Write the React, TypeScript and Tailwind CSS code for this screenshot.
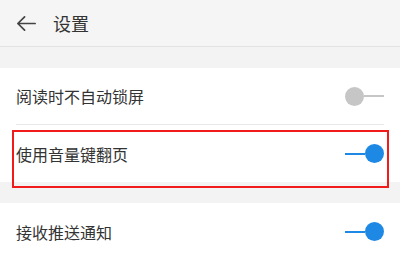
const font = { fontFamily: '"Noto Sans CJK SC", "Noto Sans", sans-serif' };

function Toggle({ on }: { on: boolean }) {
  const color = on ? 'bg-[#1e88e5]' : 'bg-[#c6c6c6]';
  return (
    <div className={`flex items-center w-[39px] shrink-0 ${on ? 'flex-row' : 'flex-row-reverse'}`}>
      <div className={`h-[2px] flex-1 ${color}`} />
      <div className={`w-[19px] h-[19px] rounded-full shrink-0 ${color}`} />
    </div>
  );
}

function Row({ label, on, divider }: { label: string; on: boolean; divider?: boolean }) {
  return (
    <div className="pl-4 pr-[16px]">
      <div className={`flex items-center justify-between h-[57px] ${divider ? 'border-b border-[#e8e8e8]' : ''}`}>
        <span className="text-[16px] text-[#333333] leading-none">{label}</span>
        <Toggle on={on} />
      </div>
    </div>
  );
}

export default function App() {
  return (
    <div className="w-[400px] h-[258px] bg-[#f3f3f3] overflow-hidden relative flex flex-col gap-[21px]" style={font}>
      {/* Header */}
      <div className="h-[47px] shrink-0 flex items-center gap-[15px] pl-[15px] border-b border-[#e2e2e2] bg-[#f5f5f5]">
        <svg viewBox="0 0 24 24" width="23" height="23" className="shrink-0" fill="none" stroke="#444" strokeWidth="1.8" strokeLinecap="round" strokeLinejoin="round">
          <path d="M21 12H3M10 5l-7 7 7 7" />
        </svg>
        <span className="text-[18px] text-[#333333]">设置</span>
      </div>

      <div className="bg-white">
        <Row label="阅读时不自动锁屏" on={false} divider />
        <Row label="使用音量键翻页" on />
      </div>

      <div className="bg-white flex-1">
        <Row label="接收推送通知" on />
      </div>

      {/* annotation box */}
      <div className="absolute left-[12px] top-[130px] w-[377px] h-[58px] border-2 border-[#f21b1b]" />
    </div>
  );
}
